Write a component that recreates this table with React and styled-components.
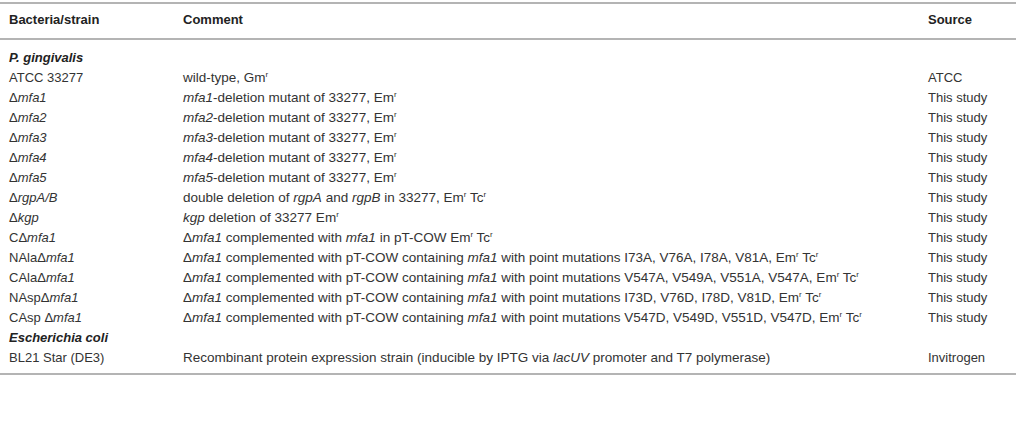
import React from 'react';
import styled, { createGlobalStyle } from 'styled-components';

const Global = createGlobalStyle`
  body {
    margin: 0;
    background: #fff;
    font-family: "Liberation Sans", Arial, sans-serif;
    color: #333;
  }
`;

const Wrap = styled.div`
  width: 1016px;
  height: 432px;
  padding-top: 2px;
  box-sizing: border-box;
`;

const Table = styled.table`
  width: 1016px;
  border-collapse: collapse;
  border-top: 2px solid #b4b4b4;
  border-bottom: 2px solid #b4b4b4;
  font-size: 13px;
  table-layout: fixed;
`;

const Head = styled.th`
  text-align: left;
  font-weight: bold;
  line-height: 16px;
  padding: 8px 0 10px ${p => p.$pad || 0}px;
  border-bottom: 2px solid #b4b4b4;
  color: #222;
`;

const Cell = styled.td`
  line-height: 20px;
  height: 20px;
  padding: 0 0 0 ${p => p.$pad || 0}px;
  font-size: ${p => p.$size || 13}px;
  white-space: nowrap;
  vertical-align: middle;
`;

const Group = styled.td`
  font-weight: bold;
  font-style: italic;
  line-height: 20px;
  padding: 0 0 0 9px;
  color: #222;
`;

const Spacer = styled.tr`
  height: ${p => p.$h}px;
`;

const Sup = styled.sup`
  font-size: 8px;
  line-height: 0;
  vertical-align: 5px;
`;

const I = styled.i``;

const R = () => <Sup>r</Sup>;
const D = () => <>Δ</>;

const rows = [
  { group: 'P. gingivalis' },
  { strain: <>ATCC 33277</>, comment: <>wild-type, Gm<R /></>, source: 'ATCC' },
  ...[1, 2, 3, 4, 5].map(n => ({
    strain: <><D /><I>mfa{n}</I></>,
    comment: <><I>mfa{n}</I>-deletion mutant of 33277, Em<R /></>,
    source: 'This study',
  })),
  {
    strain: <><D /><I>rgpA/B</I></>,
    comment: <>double deletion of <I>rgpA</I> and <I>rgpB</I> in 33277, Em<R /> Tc<R /></>,
    source: 'This study',
  },
  {
    strain: <><D /><I>kgp</I></>,
    comment: <><I>kgp</I> deletion of 33277 Em<R /></>,
    source: 'This study',
  },
  {
    strain: <>C<D /><I>mfa1</I></>,
    comment: <><D /><I>mfa1</I> complemented with <I>mfa1</I> in pT-COW Em<R /> Tc<R /></>,
    source: 'This study',
  },
  {
    strain: <>NAla<D /><I>mfa1</I></>,
    comment: <><D /><I>mfa1</I> complemented with pT-COW containing <I>mfa1</I> with point mutations I73A, V76A, I78A, V81A, Em<R /> Tc<R /></>,
    source: 'This study',
  },
  {
    strain: <>CAla<D /><I>mfa1</I></>,
    comment: <><D /><I>mfa1</I> complemented with pT-COW containing <I>mfa1</I> with point mutations V547A, V549A, V551A, V547A, Em<R /> Tc<R /></>,
    source: 'This study',
  },
  {
    strain: <>NAsp<D /><I>mfa1</I></>,
    comment: <><D /><I>mfa1</I> complemented with pT-COW containing <I>mfa1</I> with point mutations I73D, V76D, I78D, V81D, Em<R /> Tc<R /></>,
    source: 'This study',
  },
  {
    strain: <>CAsp <D /><I>mfa1</I></>,
    comment: <><D /><I>mfa1</I> complemented with pT-COW containing <I>mfa1</I> with point mutations V547D, V549D, V551D, V547D, Em<R /> Tc<R /></>,
    source: 'This study',
  },
  { group: 'Escherichia coli' },
  {
    strain: <>BL21 Star (DE3)</>,
    comment: <>Recombinant protein expression strain (inducible by IPTG via <I>lacUV</I> promoter and T7 polymerase)</>,
    source: 'Invitrogen',
  },
];

export default function App() {
  return (
    <Wrap>
      <Global />
      <Table>
        <colgroup>
          <col style={{ width: 183 }} />
          <col style={{ width: 745 }} />
          <col style={{ width: 88 }} />
        </colgroup>
        <thead>
          <tr>
            <Head $pad={9}>Bacteria/strain</Head>
            <Head>Comment</Head>
            <Head>Source</Head>
          </tr>
        </thead>
        <tbody>
          <Spacer $h={9}><td colSpan={3} /></Spacer>
          {rows.map((r, i) =>
            r.group ? (
              <tr key={i}>
                <Group colSpan={3}>{r.group}</Group>
              </tr>
            ) : (
              <tr key={i}>
                <Cell $pad={9}>{r.strain}</Cell>
                <Cell $size={13.5}>{r.comment}</Cell>
                <Cell>{r.source}</Cell>
              </tr>
            )
          )}
          <Spacer $h={6}><td colSpan={3} /></Spacer>
        </tbody>
      </Table>
    </Wrap>
  );
}
